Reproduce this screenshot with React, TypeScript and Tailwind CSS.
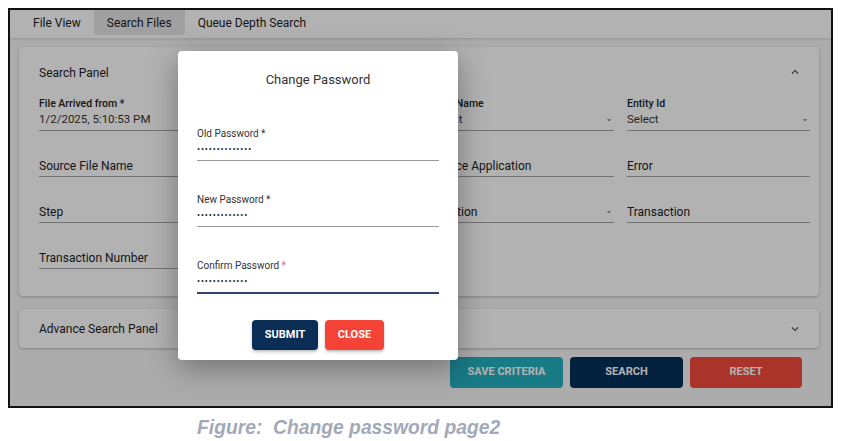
import React from "react";

const Chevron = ({ up }: { up?: boolean }) => (
  <svg width="14" height="14" viewBox="0 0 24 24" className="text-[#444]">
    <path
      d={up ? "M7.41 15.41 12 10.83l4.59 4.58L18 14l-6-6-6 6z" : "M7.41 8.59 12 13.17l4.59-4.58L18 10l-6 6-6-6z"}
      fill="currentColor"
    />
  </svg>
);

const Caret = () => (
  <svg width="10" height="10" viewBox="0 0 24 24" className="text-[#777]">
    <path d="M7 10l5 5 5-5z" fill="currentColor" />
  </svg>
);

type F = { label?: string; value?: string; placeholder?: string; select?: boolean };

const Field = ({ label, value, placeholder, select }: F) => (
  <div className="h-[34px] flex flex-col justify-end border-b border-[#a4a4a4]">
    {label && <div className="text-[10.5px] leading-[13px] text-[#222] font-medium">{label}</div>}
    <div className="flex items-center justify-between h-[20px]">
      <span className={value ? "text-[11.5px] text-[#333]" : "text-[12px] text-[#222]"}>
        {value ?? placeholder}
      </span>
      {select && <Caret />}
    </div>
  </div>
);

const PwField = ({ label, dots, focused }: { label: string; dots: number; focused?: boolean }) => (
  <div className={`flex flex-col ${focused ? "border-b-2 border-[#33416f]" : "border-b border-[#9a9a9a]"}`}>
    <div className="text-[10px] leading-[13px] text-[#333]">
      {label} <span className={focused ? "text-[#e0607a]" : ""}>*</span>
    </div>
    <div className="h-[20px] flex items-center text-[9px] tracking-[0.9px] text-[#222]">
      {"•".repeat(dots)}
    </div>
  </div>
);

export default function App() {
  return (
    <div className="w-[843px] h-[441px] bg-white pt-[8px] pl-[8px]" style={{ fontFamily: "Roboto, 'Liberation Sans', sans-serif" }}>
      <div className="relative w-[825px] h-[400px] border-2 border-[#111] bg-[#f7f7f7] overflow-hidden">
        {/* Tabs */}
        <div className="h-[28px] bg-white flex items-start pl-[10px] shadow-[0_1px_3px_rgba(0,0,0,0.15)]">
          <div className="h-[25px] px-[13px] flex items-center text-[12px] text-[#222]">File View</div>
          <div className="h-[25px] px-[13px] flex items-center text-[12px] text-[#222] bg-[#e6e6e6] rounded-b-[3px]">Search Files</div>
          <div className="h-[25px] px-[13px] flex items-center text-[12px] text-[#222]">Queue Depth Search</div>
        </div>

        <div className="pl-[9px] pr-[12px] pt-[9px]">
          {/* Search panel */}
          <div className="bg-white rounded-[4px] shadow-[0_1px_3px_rgba(0,0,0,0.25)] h-[249px] pl-[20px] pr-[9px]">
            <div className="h-[50px] flex items-center justify-between">
              <span className="text-[12px] text-[#222] pt-[1px]">Search Panel</span>
              <span className="mr-[8px]"><Chevron up /></span>
            </div>
            <div className="grid grid-cols-4 gap-x-[13px] gap-y-[12px]">
              <Field label="File Arrived from *" value="1/2/2025, 5:10:53 PM" />
              <Field label="File Arrived to *" value="1/2/2025, 5:10:53 PM" />
              <Field label="Flow Name" value="Select" select />
              <Field label="Entity Id" value="Select" select />
              <Field placeholder="Source File Name" />
              <Field placeholder="Target File Name" />
              <Field placeholder="Source Application" />
              <Field placeholder="Error" />
              <Field placeholder="Step" />
              <Field placeholder="Status" />
              <Field placeholder="Location" select />
              <Field placeholder="Transaction" />
              <Field placeholder="Transaction Number" />
            </div>
          </div>

          {/* Advance panel */}
          <div className="mt-[13px] bg-white rounded-[4px] shadow-[0_1px_3px_rgba(0,0,0,0.25)] h-[39px] pl-[20px] pr-[17px] flex items-center justify-between">
            <span className="text-[12px] text-[#222]">Advance Search Panel</span>
            <Chevron />
          </div>

          {/* Action buttons */}
          <div className="mt-[9px] flex justify-end gap-[7px] pr-[17px]">
            <button className="w-[113px] h-[31px] rounded-[4px] bg-[#25b0c0] text-white text-[11px] font-bold">SAVE CRITERIA</button>
            <button className="w-[113px] h-[31px] rounded-[4px] bg-[#04305a] text-white text-[11px] font-bold">SEARCH</button>
            <button className="w-[112px] h-[31px] rounded-[4px] bg-[#f44a3d] text-white text-[11px] font-bold">RESET</button>
          </div>
        </div>

        {/* Overlay */}
        <div className="absolute inset-0 bg-black/30" />

        {/* Dialog */}
        <div className="absolute left-[168px] top-[41px] w-[280px] h-[309px] bg-white rounded-[4px] shadow-[0_8px_30px_rgba(0,0,0,0.35)] px-[19px]">
          <div className="text-center text-[13px] text-[#333] pt-[20px] leading-[18px]">Change Password</div>
          <div className="mt-[38px]">
            <PwField label="Old Password" dots={14} />
          </div>
          <div className="mt-[32px]">
            <PwField label="New Password" dots={13} />
          </div>
          <div className="mt-[32px]">
            <PwField label="Confirm Password" dots={13} focused />
          </div>
          <div className="mt-[26px] flex justify-center gap-[7px]">
            <button className="w-[66px] h-[30px] rounded-[4px] bg-[#0a2d55] text-white text-[11px] font-bold shadow-[0_2px_3px_rgba(0,0,0,0.25)]">SUBMIT</button>
            <button className="w-[59px] h-[30px] rounded-[4px] bg-[#f44336] text-white text-[11px] font-bold shadow-[0_2px_3px_rgba(0,0,0,0.25)]">CLOSE</button>
          </div>
        </div>
      </div>

      <div className="pl-[189px] pt-[6px] text-[19.3px] font-bold italic text-[#a2a9b8]" style={{ fontFamily: "'Liberation Sans', Arial, sans-serif" }}>
        Figure:&nbsp; Change password page2
      </div>
    </div>
  );
}
